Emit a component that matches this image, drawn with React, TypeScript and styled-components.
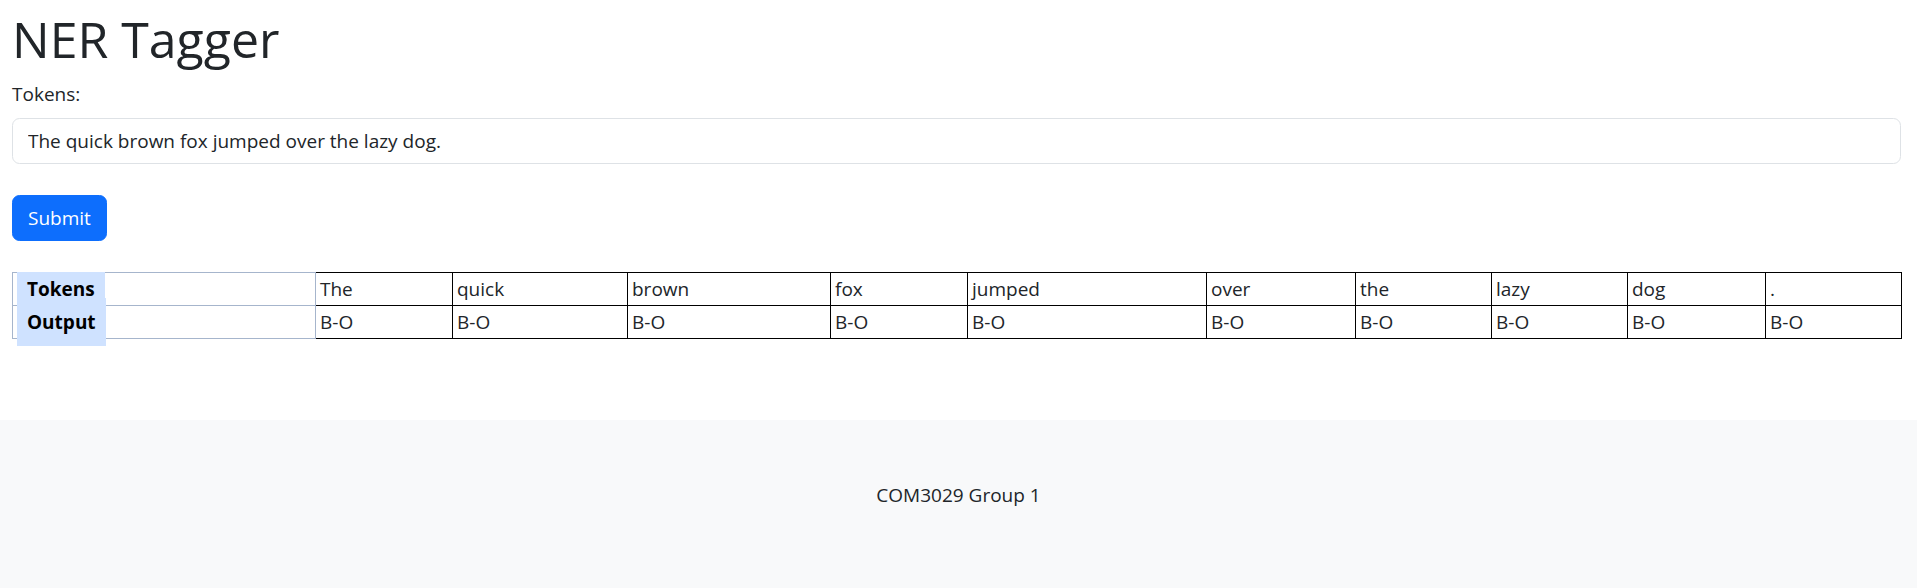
import React from "react";
import styled, { createGlobalStyle } from "styled-components";

const GlobalStyle = createGlobalStyle`
  * { box-sizing: border-box; }
  body {
    margin: 0;
    font-family: "Open Sans", "Noto Sans", sans-serif;
    font-size: 19px;
    line-height: 30px;
    color: #212529;
    background: #fff;
  }
`;

const tokens = ["The", "quick", "brown", "fox", "jumped", "over", "the", "lazy", "dog", "."];
const labels = tokens.map(() => "B-O");
const colWidths = [303, 137, 175, 203, 137, 239, 149, 136, 136, 138, 136];

const Main = styled.main`
  padding: 9px 16px 81px 12px;
`;

const Title = styled.h1`
  margin: 0 0 10px;
  font-size: 50px;
  font-weight: 500;
  line-height: 60px;
  color: #212529;
`;

const Form = styled.form`
  display: flex;
  flex-direction: column;
  align-items: flex-start;
`;

const Label = styled.label`
  display: block;
  margin-bottom: 9px;
`;

const Input = styled.input`
  display: block;
  width: 100%;
  height: 46px;
  padding: 0 15px;
  margin-bottom: 31px;
  font: inherit;
  color: #212529;
  background: #fff;
  border: 1px solid #dee2e6;
  border-radius: 7.5px;
  outline: none;
`;

const Button = styled.button`
  height: 46px;
  padding: 0 15px;
  margin-bottom: 31px;
  font: inherit;
  color: #fff;
  background: #0d6efd;
  border: 1px solid #0d6efd;
  border-radius: 7.5px;
  cursor: pointer;
`;

const Table = styled.table`
  width: 100%;
  table-layout: fixed;
  border-collapse: collapse;
`;

const Col = styled.col<{ $w: number }>`
  width: ${(p) => p.$w}px;
`;

const HeadCell = styled.th`
  padding: 1px 4px;
  text-align: left;
  font-weight: 700;
  color: #000;
  border: 1px solid #a6b5cc;
`;

const Tag = styled.span<{ $top: number; $bottom: number }>`
  padding: ${(p) => `${p.$top}px 10px ${p.$bottom}px`};
  background: #cfe2ff;
`;

const Cell = styled.td`
  padding: 1px 4px;
  border: 1px solid #000;
  white-space: nowrap;
  overflow: hidden;
`;

const Footer = styled.footer`
  padding: 60px 0 78px;
  text-align: center;
  background: #f8f9fa;
`;

export default function App() {
  return (
    <>
      <GlobalStyle />
      <Main>
        <Title>NER Tagger</Title>
        <Form onSubmit={(e) => e.preventDefault()}>
          <Label htmlFor="tokens">Tokens:</Label>
          <Input id="tokens" defaultValue="The quick brown fox jumped over the lazy dog." />
          <Button type="submit">Submit</Button>
        </Form>
        <Table>
          <colgroup>
            {colWidths.map((w, i) => (
              <Col key={i} $w={w} />
            ))}
          </colgroup>
          <tbody>
            <tr>
              <HeadCell>
                <Tag $top={4} $bottom={0}>Tokens</Tag>
              </HeadCell>
              {tokens.map((t, i) => (
                <Cell key={i}>{t}</Cell>
              ))}
            </tr>
            <tr>
              <HeadCell>
                <Tag $top={11} $bottom={11}>Output</Tag>
              </HeadCell>
              {labels.map((l, i) => (
                <Cell key={i}>{l}</Cell>
              ))}
            </tr>
          </tbody>
        </Table>
      </Main>
      <Footer>COM3029 Group 1</Footer>
    </>
  );
}
